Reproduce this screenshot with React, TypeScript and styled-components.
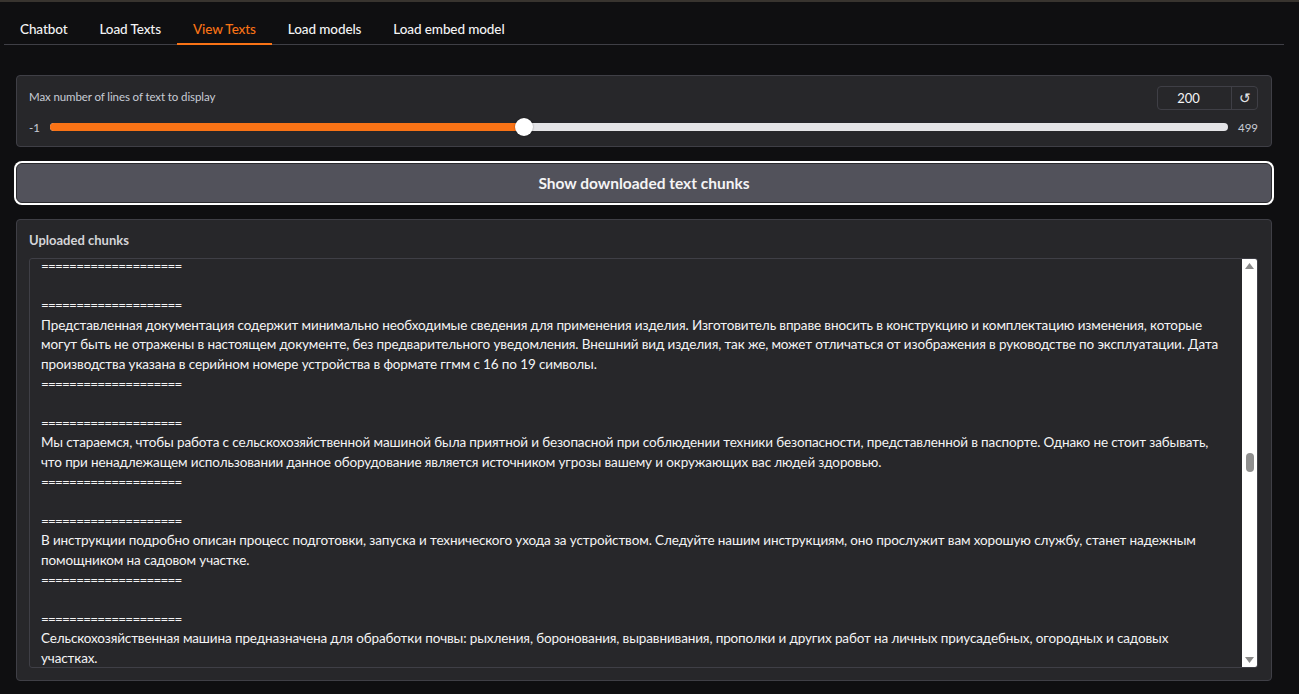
import React from "react";
import styled, { createGlobalStyle } from "styled-components";

const Global = createGlobalStyle`
  html, body { margin: 0; padding: 0; background: #0f0f11; }
  body {
    font-family: "Lato", "Open Sans", "Noto Sans", sans-serif;
    color: #f4f4f5;
    border-top: 2px solid #38342f;
    min-height: 692px;
    box-sizing: border-box;
  }
  * { box-sizing: border-box; }
`;

const Page = styled.div`
  padding: 12px 15px 0 4px;
`;

const TabBar = styled.div`
  display: flex;
  border-bottom: 1px solid #3f3f46;
  height: 31px;
`;

const Tab = styled.div<{ $active?: boolean }>`
  padding: 0 16px;
  height: 31px;
  display: flex;
  align-items: center;
  font-size: 13.5px;
  letter-spacing: -0.1px;
  font-weight: 500;
  color: ${(p) => (p.$active ? "#f97316" : "#f4f4f5")};
  border-bottom: 2px solid ${(p) => (p.$active ? "#f97316" : "transparent")};
  margin-bottom: -1px;
`;

const Panel = styled.div`
  padding: 30px 12px 0 12px;
  display: flex;
  flex-direction: column;
  gap: 16px;
`;

const Block = styled.div`
  background: #27272a;
  border: 1px solid #3f3f46;
  border-radius: 4px;
`;

const SliderBlock = styled(Block)`
  height: 72px;
  padding: 10px 13px 0 12px;
  display: flex;
  flex-direction: column;
`;

const TopRow = styled.div`
  display: flex;
  justify-content: space-between;
  align-items: center;
  height: 23px;
`;

const Label = styled.span`
  font-size: 11.5px;
  letter-spacing: -0.1px;
  color: #c8ccd6;
  margin-bottom: 2px;
`;

const NumberGroup = styled.div`
  display: flex;
  border: 1px solid #3f3f46;
  border-radius: 4px;
  height: 24px;
`;

const NumberValue = styled.div`
  width: 74px;
  display: flex;
  align-items: center;
  justify-content: center;
  padding-right: 12px;
  font-size: 13px;
  color: #f4f4f5;
  border-right: 1px solid #3f3f46;
`;

const ResetBtn = styled.div`
  width: 25px;
  display: flex;
  align-items: center;
  justify-content: center;
  font-size: 14px;
  color: #e4e4e7;
`;

const SliderRow = styled.div`
  display: flex;
  align-items: center;
  margin-top: 6px;
  height: 24px;
  gap: 10px;
`;

const Bound = styled.span`
  font-size: 11.5px;
  color: #c8ccd6;
`;

const Track = styled.div`
  flex: 1;
  height: 8px;
  border-radius: 4px;
  background: #e4e4e7;
  display: flex;
  align-items: center;
`;

const Fill = styled.div`
  height: 8px;
  border-radius: 4px 0 0 4px;
  background: #f97316;
`;

const Thumb = styled.div`
  width: 18px;
  height: 18px;
  border-radius: 50%;
  background: #ffffff;
  margin-left: -9px;
  margin-right: -9px;
  flex-shrink: 0;
  box-shadow: 0 0 2px rgba(0,0,0,0.4);
`;

const BigButton = styled.button`
  height: 40px;
  margin: 0;
  background: #52525b;
  border: 1px solid #2a2a2e;
  border-radius: 6px;
  box-shadow: 0 0 0 2px #ffffff;
  color: #f4f4f5;
  font-family: inherit;
  font-size: 15.5px;
  font-weight: 700;
  cursor: pointer;
`;

const ChunksBlock = styled(Block)`
  height: 462px;
  padding: 12px 13px 12px 12px;
  display: flex;
  flex-direction: column;
`;

const BlockTitle = styled.div`
  font-size: 13px;
  font-weight: 700;
  color: #d4d4d8;
  height: 18px;
  margin-bottom: 8px;
`;

const TextArea = styled.div`
  flex: 1;
  display: flex;
  border: 1px solid #3f3f46;
  border-radius: 3px;
  overflow: hidden;
  background: #27272a;
`;

const TextBody = styled.div`
  flex: 1;
  overflow: hidden;
  padding: 0 11px;
`;

const Lines = styled.div`
  margin-top: -2px;
  display: flex;
  flex-direction: column;
`;

const Line = styled.div<{ $sep?: boolean }>`
  white-space: pre;
  font-size: 13.5px;
  letter-spacing: ${(p) => (p.$sep ? "-0.8px" : "-0.12px")};
  line-height: 19.6px;
  height: 19.6px;
  color: #f4f4f5;
`;

const ScrollBar = styled.div`
  width: 15px;
  background: #ffffff;
  display: flex;
  flex-direction: column;
  align-items: center;
  justify-content: space-between;
  padding: 4px 0 4px;
`;

const ScrollTrack = styled.div`
  flex: 1;
  width: 100%;
  display: flex;
  flex-direction: column;
  align-items: center;
  padding-top: 184px;
`;

const ScrollThumb = styled.div`
  width: 8px;
  height: 19px;
  border-radius: 4px;
  background: #8f8f8f;
`;

const SEP = "====================";

const lines: string[] = [
  SEP,
  "",
  SEP,
  "Представленная документация содержит минимально необходимые сведения для применения изделия. Изготовитель вправе вносить в конструкцию и комплектацию изменения, которые",
  "могут быть не отражены в настоящем документе, без предварительного уведомления. Внешний вид изделия, так же, может отличаться от изображения в руководстве по эксплуатации. Дата",
  "производства указана в серийном номере устройства в формате ггмм с 16 по 19 символы.",
  SEP,
  "",
  SEP,
  "Мы стараемся, чтобы работа с сельскохозяйственной машиной была приятной и безопасной при соблюдении техники безопасности, представленной в паспорте. Однако не стоит забывать,",
  "что при ненадлежащем использовании данное оборудование является источником угрозы вашему и окружающих вас людей здоровью.",
  SEP,
  "",
  SEP,
  "В инструкции подробно описан процесс подготовки, запуска и технического ухода за устройством. Следуйте нашим инструкциям, оно прослужит вам хорошую службу, станет надежным",
  "помощником на садовом участке.",
  SEP,
  "",
  SEP,
  "Сельскохозяйственная машина предназначена для обработки почвы: рыхления, боронования, выравнивания, прополки и других работ на личных приусадебных, огородных и садовых",
  "участках.",
  "",
];

const tabs = ["Chatbot", "Load Texts", "View Texts", "Load models", "Load embed model"];

export default function App() {
  const min = -1;
  const max = 499;
  const value = 200;
  const pct = ((value - min) / (max - min)) * 100;
  return (
    <>
      <Global />
      <Page>
        <TabBar>
          {tabs.map((t) => (
            <Tab key={t} $active={t === "View Texts"}>
              {t}
            </Tab>
          ))}
        </TabBar>
        <Panel>
          <SliderBlock>
            <TopRow>
              <Label>Max number of lines of text to display</Label>
              <NumberGroup>
                <NumberValue>200</NumberValue>
                <ResetBtn>↺</ResetBtn>
              </NumberGroup>
            </TopRow>
            <SliderRow>
              <Bound>-1</Bound>
              <Track>
                <Fill style={{ width: `${pct}%` }} />
                <Thumb />
              </Track>
              <Bound>499</Bound>
            </SliderRow>
          </SliderBlock>
          <BigButton>Show downloaded text chunks</BigButton>
          <ChunksBlock>
            <BlockTitle>Uploaded chunks</BlockTitle>
            <TextArea>
              <TextBody>
                <Lines>
                  {lines.map((l, i) => (
                    <Line key={i} $sep={l === SEP}>
                      {l}
                    </Line>
                  ))}
                </Lines>
              </TextBody>
              <ScrollBar>
                <svg width="9" height="6" viewBox="0 0 9 6">
                  <path d="M0 6 L4.5 0 L9 6 Z" fill="#8a8a8a" />
                </svg>
                <ScrollTrack>
                  <ScrollThumb />
                </ScrollTrack>
                <svg width="9" height="6" viewBox="0 0 9 6">
                  <path d="M0 0 L4.5 6 L9 0 Z" fill="#8a8a8a" />
                </svg>
              </ScrollBar>
            </TextArea>
          </ChunksBlock>
        </Panel>
      </Page>
    </>
  );
}
